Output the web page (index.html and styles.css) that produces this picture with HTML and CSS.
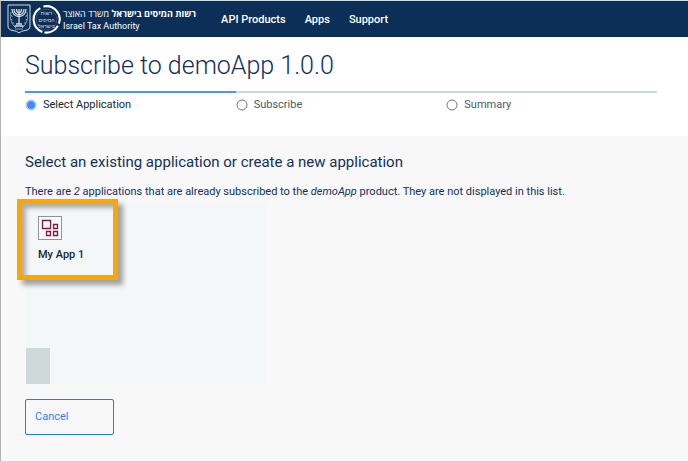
FILE: index.html
```html
<!DOCTYPE html>
<html lang="en">
<head>
<meta charset="utf-8">
<meta name="viewport" content="width=device-width, initial-scale=1">
<title>Subscribe to demoApp 1.0.0</title>
<link rel="stylesheet" href="styles.css">
</head>
<body>
<header class="site-header">
  <a class="brand" href="#">
    <svg class="brand-emblem" viewBox="0 0 24 30" aria-hidden="true">
      <path class="emblem-shield" d="M1 1H23V22Q23 26 18 26.5Q14 27 12 29Q10 27 6 26.5Q1 26 1 22Z"/>
      <path class="emblem-branch" d="M4 8C2.500 14 4 20 9 24M20 8C21.500 14 20 20 15 24M4 11l1.500 2M3.500 15l2 1M5 19l2 0M20 11l-1.500 2M20.500 15l-2 1M19 19l-2 0M8 25H16"/>
      <path class="emblem-line" d="M12 5V20M5 5C5 15 19 15 19 5M7 5C7 12.500 17 12.500 17 5M9.500 5C9.500 10 14.500 10 14.500 5M9 20H15M7.500 22H16.500"/>
    </svg>
    <svg class="brand-seal" viewBox="0 0 28 28" aria-hidden="true">
      <path class="seal-ring" d="M11 1.500A12.700 12.700 0 0 1 26 18M25 20A12.700 12.700 0 0 1 12 26.500M10 26A12.700 12.700 0 0 1 8 3"/>
      <circle class="seal-inner" cx="14" cy="14" r="10"/>
      <text class="seal-text" x="14" y="10">רשות</text>
      <text class="seal-text" x="14" y="16">המיסים</text>
      <text class="seal-text" x="14" y="22">בישראל</text>
    </svg>
    <span class="brand-name">
      <span class="brand-hebrew" lang="he" dir="rtl"><b>רשות המיסים בישראל</b> משרד האוצר</span>
      <span class="brand-english">Israel Tax Authority</span>
    </span>
  </a>
  <nav class="site-nav">
    <a href="#">API Products</a>
    <a href="#">Apps</a>
    <a href="#">Support</a>
  </nav>
</header>
<main>
  <section class="intro">
    <h1>Subscribe to demoApp 1.0.0</h1>
    <ol class="steps">
      <li class="step step-current" aria-current="step">
        <svg viewBox="0 0 12 12" aria-hidden="true"><circle class="dot-ring" cx="6" cy="6" r="5"/><circle class="dot-fill" cx="6" cy="6" r="4"/></svg>
        <span>Select Application</span>
      </li>
      <li class="step">
        <svg viewBox="0 0 12 12" aria-hidden="true"><circle class="dot-ring" cx="6" cy="6" r="5"/></svg>
        <span>Subscribe</span>
      </li>
      <li class="step">
        <svg viewBox="0 0 12 12" aria-hidden="true"><circle class="dot-ring" cx="6" cy="6" r="5"/></svg>
        <span>Summary</span>
      </li>
    </ol>
  </section>
  <section class="selection">
    <h2>Select an existing application or create a new application</h2>
    <p class="note">There are <em>2</em> applications that are already subscribed to the <em>demoApp</em> product. They are not displayed in this list.</p>
    <div class="app-panel">
      <button class="app-card" type="button">
        <svg class="app-icon" viewBox="0 0 24 24" aria-hidden="true">
          <rect class="icon-frame" x="0.500" y="0.500" width="23" height="23"/>
          <path class="icon-shapes" d="M4.500 4.500h8v8h-8zM15.500 8.500h4v4h-4zM8.500 15.500h4v4h-4zM15.500 15.500h4v4h-4z"/>
        </svg>
        <span>My App 1</span>
      </button>
      <span class="panel-footer"></span>
      <span class="highlight"></span>
    </div>
    <button class="cancel" type="button">Cancel</button>
  </section>
</main>
</body>
</html>
```
FILE: styles.css
```css
* {
  box-sizing: border-box;
}

body {
  margin: 0;
  min-height: 100vh;
  display: flex;
  flex-direction: column;
  border-top: 1px solid #d3dcdc;
  border-left: 1px solid #b4b4b6;
  background: #f8f8f8;
  color: #152935;
  font-family: Roboto, "Liberation Sans", sans-serif;
  font-size: 11px;
  line-height: 16px;
}

button {
  font: inherit;
  text-align: left;
  cursor: pointer;
}

.site-header {
  display: flex;
  align-items: center;
  gap: 25px;
  height: 36px;
  padding-left: 6px;
  background: #0c2f57;
  color: #fff;
}

.site-header a {
  color: inherit;
  text-decoration: none;
}

.brand {
  display: flex;
  align-items: center;
  gap: 1px;
}

.brand-emblem {
  width: 24px;
  height: 30px;
}

.brand-seal {
  width: 29px;
  height: 29px;
}

.emblem-shield,
.emblem-line,
.emblem-branch,
.seal-ring,
.seal-inner {
  fill: none;
  stroke: #d5dde6;
}

.emblem-line {
  stroke-width: 1.3;
}

.emblem-branch {
  stroke: #8d9eb3;
}

.seal-ring {
  stroke: #fff;
  stroke-width: 2;
}

.seal-inner {
  stroke: #4b6483;
  stroke-width: 0.6;
}

.seal-text {
  fill: #d5dde6;
  font-family: "Liberation Sans", sans-serif;
  font-size: 5px;
  text-anchor: middle;
}

.brand-name {
  display: flex;
  flex-direction: column;
  padding-left: 1px;
  padding-top: 2px;
  line-height: 12px;
}

.brand-hebrew {
  font-family: "Open Sans", "Liberation Sans", sans-serif;
  font-size: 9px;
  white-space: nowrap;
}

.brand-english {
  font-size: 9px;
}

.site-nav {
  display: flex;
  gap: 19px;
  padding-top: 2px;
  font-weight: 500;
}

.intro {
  padding: 13px 31px 23px 24px;
  background: #fff;
}

h1 {
  margin: 0 0 9px;
  color: #12305a;
  font-size: 25px;
  font-weight: 300;
  line-height: 32px;
}

.steps {
  display: grid;
  grid-template-columns: repeat(3, 1fr);
  margin: 0;
  padding: 0;
  list-style: none;
}

.step {
  display: flex;
  align-items: center;
  gap: 6px;
  padding: 4px 0 0;
  border-top: 2px solid #cddbdb;
  color: #4d5a63;
}

.step svg {
  width: 12px;
  height: 12px;
}

.step-current {
  border-color: #5392ff;
  color: #152935;
}

.dot-ring {
  fill: none;
  stroke: #6d7777;
}

.step-current .dot-ring {
  stroke: #8fb6ff;
}

.dot-fill {
  fill: #408bfc;
}

.selection {
  padding: 16px 24px 24px;
}

h2 {
  margin: 0 0 12px;
  color: #12305a;
  font-size: 15px;
  font-weight: 400;
  line-height: 20px;
}

.note {
  margin: 0 0 4px;
  color: #12305a;
}

.app-panel {
  position: relative;
  display: flex;
  flex-direction: column;
  justify-content: space-between;
  width: 240px;
  min-height: 180px;
  margin: 0 1px 15px;
  background: #f3f7f8;
}

.app-card {
  display: flex;
  flex-direction: column;
  gap: 7px;
  padding: 12px;
  border: 0;
  background: none;
  color: #152935;
  font-weight: 500;
}

.app-icon {
  width: 24px;
  height: 24px;
}

.icon-frame {
  fill: #f7f9fa;
  stroke: #8a9797;
}

.icon-shapes {
  fill: none;
  stroke: #7c1c43;
  stroke-width: 1.3;
}

.panel-footer {
  width: 24px;
  height: 36px;
  background: #d0d9da;
}

.highlight {
  position: absolute;
  top: -5px;
  left: -9px;
  width: 101px;
  height: 81px;
  border: 5px solid #ffa500;
  box-shadow: 5px 5px 5px rgba(0, 0, 0, 0.35), inset 4px 4px 4px rgba(0, 0, 0, 0.3);
  pointer-events: none;
}

.cancel {
  display: block;
  width: 89px;
  height: 36px;
  padding: 0 9px;
  border: 1px solid #1a80ea;
  border-radius: 2px;
  background: transparent;
  color: #2f83f0;
}
```
